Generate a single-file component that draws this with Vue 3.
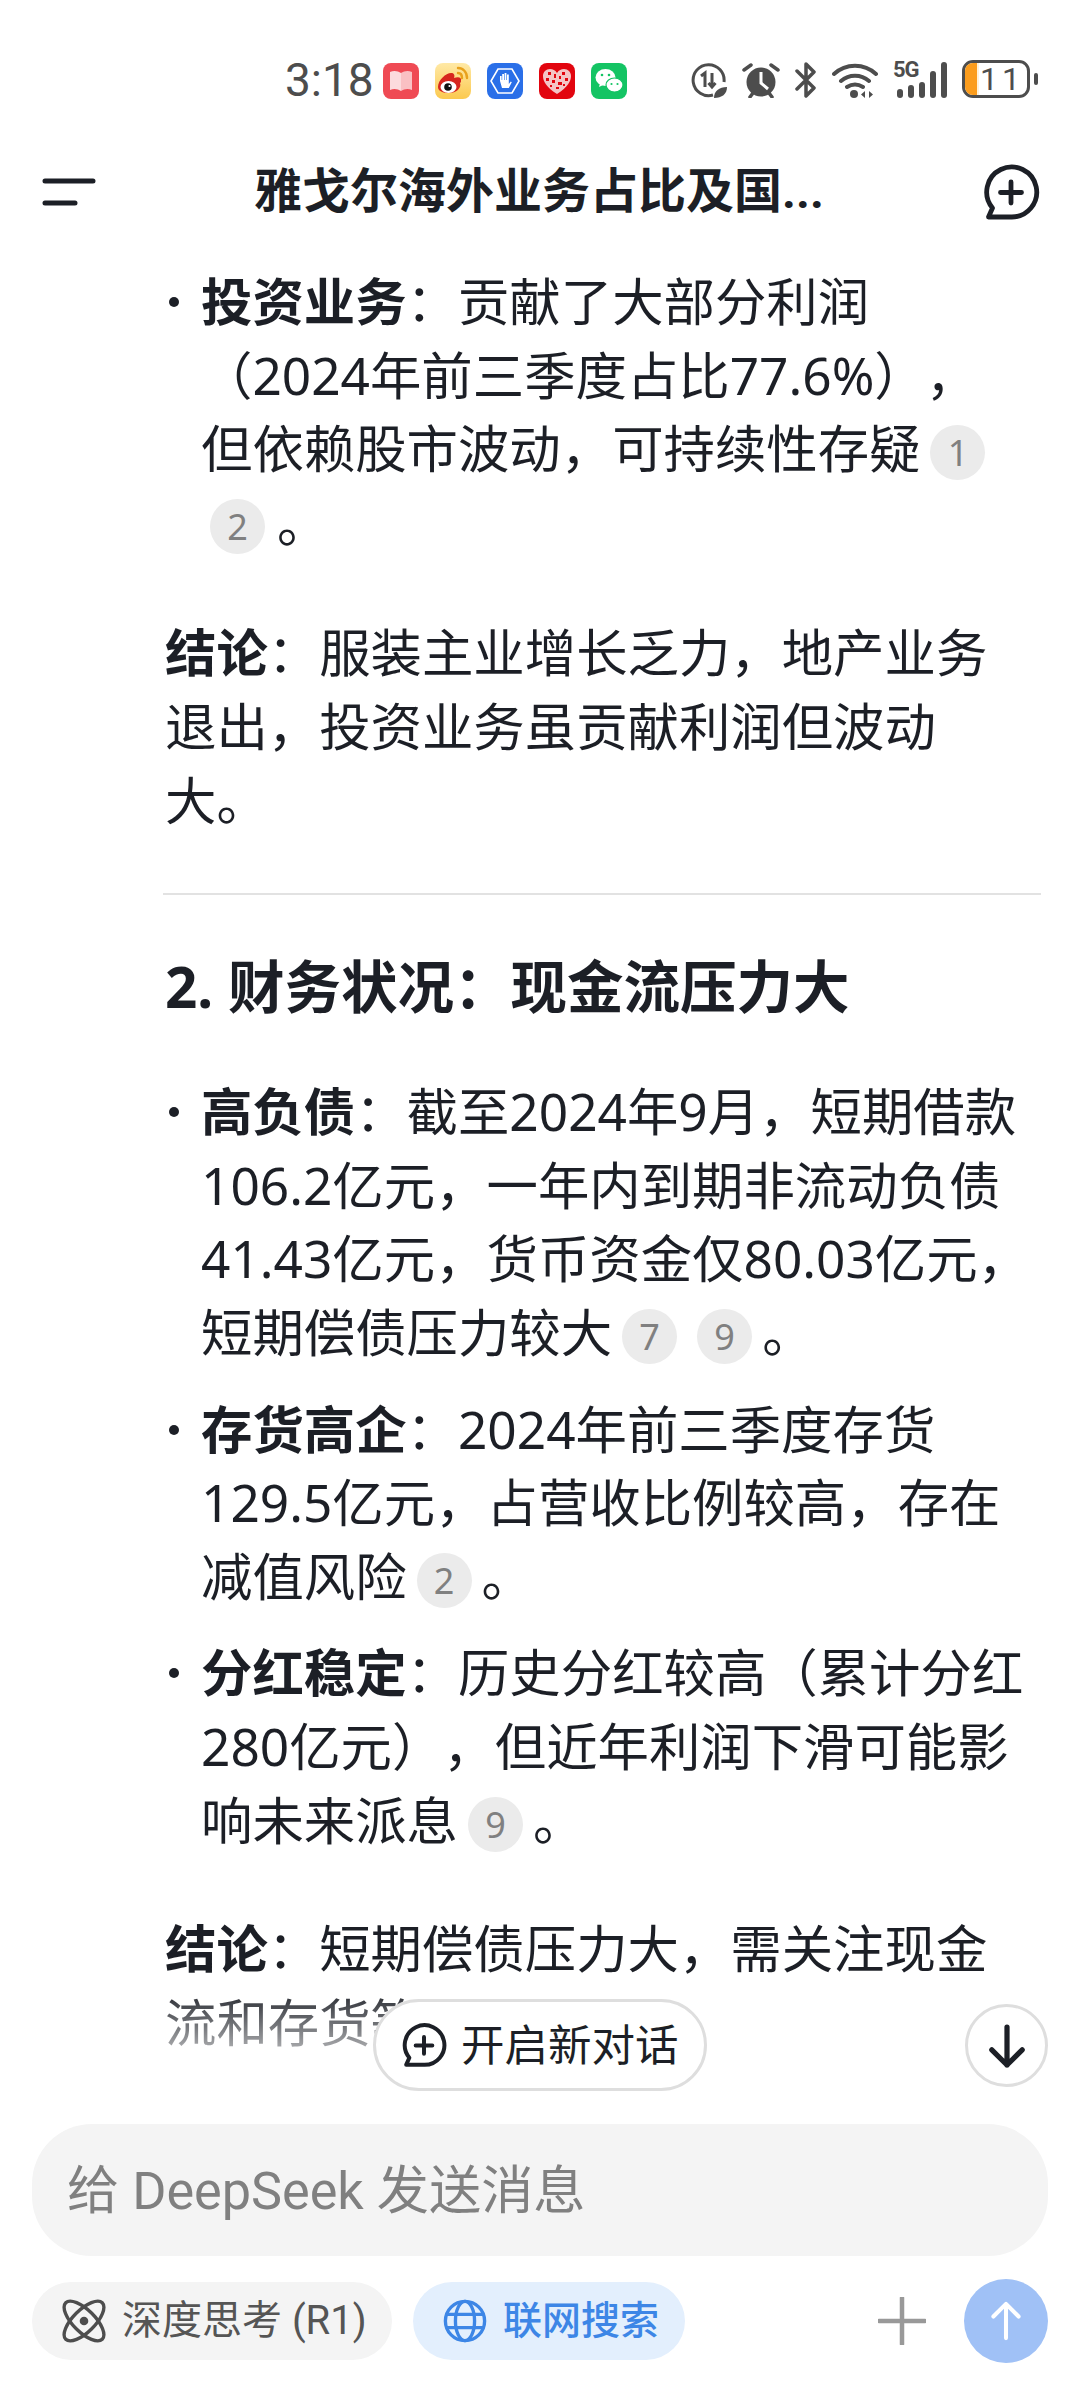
<script setup>
const apps = ['book', 'weibo', 'hand', 'heart', 'wechat']
</script>

<template>
  <div class="page">
    <div class="status">
      <span class="time">3:18</span>
      <div class="apps">
        <span v-for="a in apps" :key="a" class="app" :class="a">
          <svg v-if="a === 'book'" viewBox="0 0 36 36"><path d="M7 9c4-2 8-1 11 1v18c-3-2-7-3-11-1z" fill="#fff" opacity=".8"/><path d="M29 9c-4-2-8-1-11 1v18c3-2 7-3 11-1z" fill="#fff" opacity=".65"/></svg>
          <svg v-else-if="a === 'weibo'" viewBox="0 0 36 36"><path d="M3 24c0-7 8-14 13-14 3 0 4 2 3 5 5-2 8 0 7 3 0 1 0 1-1 2 2 5-4 10-11 10-6 0-11-2-11-6z" fill="#d7261e"/><ellipse cx="13.500" cy="24" rx="8" ry="6" fill="#fff"/><circle cx="13" cy="24" r="3.800" fill="#111"/><circle cx="14.500" cy="23" r="1.100" fill="#fff"/><path d="M23 5c5 0 9 4 9 10M23 10c2.500 0 4 2 4 5" fill="none" stroke="#e8a11c" stroke-width="2.400" stroke-linecap="round"/></svg>
          <svg v-else-if="a === 'hand'" viewBox="0 0 36 36"><path d="M11 6h14l7 12-7 12H11L4 18z" fill="none" stroke="#fff" stroke-width="1.600"/><path d="M13 18v-5h1.600v4h.6v-6h1.800v6h.6v-7h1.800v7h.6v-5.600h1.800V21l2-2.500 1 .8-3 5.700H15z" fill="#fff"/></svg>
          <svg v-else-if="a === 'heart'" viewBox="0 0 36 36"><path d="M18 31C7 24 4 18 4 13c0-4 3-7 7-7 3 0 5 1 7 4 2-3 4-4 7-4 4 0 7 3 7 7 0 5-3 11-14 18z" fill="#f4c4c6"/><path d="M9 9h3v3H9zM15 11h2v4h-2zM23 9h3v3h-3zM7 15h3v3H7zM13 17h3v3h-3zM20 13h2v3h-2zM19 19h4v3h-4zM26 15h3v3h-3zM11 22h2v2h-2zM17 24h3v2h-3zM24 21h2v2h-2z" fill="#e2050f"/></svg>
          <svg v-else viewBox="0 0 36 36"><ellipse cx="14.500" cy="14.500" rx="10" ry="8.500" fill="#fff"/><path d="M9 20l-1 4 4-2z" fill="#fff"/><ellipse cx="23.500" cy="22" rx="8.500" ry="7" fill="#fff" stroke="#14c464" stroke-width="1.200"/><circle cx="11" cy="12" r="1.300" fill="#14c464"/><circle cx="18" cy="12" r="1.300" fill="#14c464"/><circle cx="20.500" cy="21" r="1.100" fill="#14c464"/><circle cx="26.500" cy="21" r="1.100" fill="#14c464"/></svg>
        </span>
      </div>
      <div class="sys">
        <svg class="i-data" viewBox="0 0 36 36"><path d="M22 33A15.500 15.500 0 1 1 33 20" fill="none" stroke="#4d4d4d" stroke-width="3"/><path d="M10 14l4-3v14M21 11v14m-3.500-4l3.500 4 3.500-4" fill="none" stroke="#4d4d4d" stroke-width="3"/><path d="M23 36c0-7 5-11 13-11 0 7-5 11-13 11z" fill="#4d4d4d"/></svg>
        <svg class="i-alarm" viewBox="0 0 38 36"><circle cx="19" cy="20" r="14.500" fill="#4d4d4d"/><path d="M19 10v11l7 6" fill="none" stroke="#fff" stroke-width="3"/><path d="M2 8l7-5M36 8l-7-5M8 35l3-4M30 35l-3-4" stroke="#4d4d4d" stroke-width="3.500" stroke-linecap="round"/></svg>
        <svg class="i-bt" viewBox="0 0 22 36"><path d="M2 9l17 17-8 8V2l8 8L2 27" fill="none" stroke="#4d4d4d" stroke-width="3.500" stroke-linejoin="round" stroke-linecap="round"/></svg>
        <svg class="i-wifi" viewBox="0 0 46 36"><path d="M2 12c12-11 30-11 42 0M9 19c8-7 20-7 28 0M15 25c5-3 11-3 16 0" fill="none" stroke="#4d4d4d" stroke-width="4" stroke-linecap="round"/><circle cx="22" cy="32" r="4" fill="#4d4d4d"/><path d="M33 29v7l-4-3.500zM37 29v7l4-3.500z" fill="#4d4d4d"/></svg>
        <div class="signal">
          <span class="fiveg">5G</span>
          <span class="bar b0"></span><span class="bar b1"></span><span class="bar b2"></span><span class="bar b3"></span><span class="bar b4"></span>
        </div>
        <div class="battery">
          <div class="cell"><span class="fill"></span><span class="num">11</span></div>
          <span class="nub"></span>
        </div>
      </div>
    </div>

    <header class="bar-top">
      <svg class="menu" viewBox="0 0 54 30"><path d="M3 4h48M3 26h30" stroke="#1c1f26" stroke-width="5" stroke-linecap="round" fill="none"/></svg>
      <h1 class="title">雅戈尔海外业务占比及国...</h1>
      <svg class="newchat" viewBox="0 0 58 58"><path d="M10.500 45A25 25 0 1 1 29 54H6.500z" fill="none" stroke="#1c1f26" stroke-width="4.800" stroke-linejoin="round"/><path d="M29 19v21M18.500 29.500h21" stroke="#1c1f26" stroke-width="4.800" stroke-linecap="round"/></svg>
    </header>

    <main class="chat">
      <ul class="list first">
        <li><b>投资业务</b>：贡献了大部分利润<br>（2024年前三季度占比77.6%），<br>但依赖股市波动，可持续性存疑<span class="cite">1</span><br><span class="cite solo">2</span>。</li>
      </ul>
      <p class="para"><b>结论</b>：服装主业增长乏力，地产业务<br>退出，投资业务虽贡献利润但波动<br>大。</p>
      <hr class="rule">
      <h2 class="heading">2. 财务状况：现金流压力大</h2>
      <ul class="list">
        <li><b>高负债</b>：截至2024年9月，短期借款<br>106.2亿元，一年内到期非流动负债<br>41.43亿元，货币资金仅80.03亿元，<br>短期偿债压力较大<span class="cite">7</span><span class="cite">9</span>。</li>
        <li><b>存货高企</b>：2024年前三季度存货<br>129.5亿元，占营收比例较高，存在<br>减值风险<span class="cite">2</span>。</li>
        <li><b>分红稳定</b>：历史分红较高（累计分红<br>280亿元），但近年利润下滑可能影<br>响未来派息<span class="cite">9</span>。</li>
      </ul>
      <p class="para"><b>结论</b>：短期偿债压力大，需关注现金<br>流和存货等。</p>
      <div class="fade"></div>
      <button class="pill">
        <svg viewBox="0 0 58 58"><path d="M10.500 45A25 25 0 1 1 29 54H6.500z" fill="none" stroke="#1c1f26" stroke-width="5" stroke-linejoin="round"/><path d="M29 19v21M18.500 29.500h21" stroke="#1c1f26" stroke-width="5" stroke-linecap="round"/></svg>
        开启新对话
      </button>
      <button class="down">
        <svg viewBox="0 0 40 46"><path d="M20 3v40M4 27l16 16 16-16" fill="none" stroke="#1c1f26" stroke-width="5.500" stroke-linecap="round" stroke-linejoin="round"/></svg>
      </button>
    </main>

    <footer class="composer">
      <div class="input">给 DeepSeek 发送消息</div>
      <div class="tools">
        <div class="chip gray">
          <svg viewBox="0 0 46 46"><ellipse cx="23" cy="23" rx="11.500" ry="27" transform="rotate(-45 23 23)" fill="none" stroke="#4d4d4d" stroke-width="3.500"/><ellipse cx="23" cy="23" rx="11.500" ry="27" transform="rotate(45 23 23)" fill="none" stroke="#4d4d4d" stroke-width="3.500"/><circle cx="23" cy="23" r="4.500" fill="#4d4d4d"/></svg>
          深度思考 (R1)
        </div>
        <div class="chip blue">
          <svg viewBox="0 0 46 46"><circle cx="23" cy="23" r="20.500" fill="none" stroke="#3d86e6" stroke-width="3.500"/><ellipse cx="23" cy="23" rx="10" ry="20.500" fill="none" stroke="#3d86e6" stroke-width="3.500"/><path d="M3 16h40M3 30h40" stroke="#3d86e6" stroke-width="3.500"/></svg>
          联网搜索
        </div>
        <svg class="plus" viewBox="0 0 48 48"><path d="M24 1v46M1 24h46" stroke="#999" stroke-width="4.500" stroke-linecap="round"/></svg>
        <div class="send">
          <svg viewBox="0 0 40 46"><path d="M20 42V4M6 18L20 4l14 14" fill="none" stroke="#fff" stroke-width="4.500" stroke-linecap="round" stroke-linejoin="round"/></svg>
        </div>
      </div>
    </footer>
  </div>
</template>

<style scoped>
.page {
  width: 1080px;
  height: 2400px;
  display: flex;
  flex-direction: column;
  background: #fff;
  color: #1c1f26;
  font-family: Roboto, "Noto Sans CJK SC", sans-serif;
  overflow: hidden;
}
.status {
  height: 122px;
  padding: 58px 40px 0 285px;
  box-sizing: border-box;
  display: flex;
  align-items: flex-start;
  color: #4d4d4d;
  flex: none;
}
.time { font-size: 46px; line-height: 44px; width: 98px; }
.apps { display: flex; gap: 16px; margin-top: 5px; }
.app { width: 36px; height: 36px; border-radius: 8px; display: block; overflow: hidden; }
.app svg { display: block; width: 36px; height: 36px; }
.book { background: #ef4a54; }
.weibo { background: linear-gradient(#ffe9a6, #fbc94f); }
.hand { background: #2a6fe8; }
.heart { background: #e2050f; }
.wechat { background: #14c464; }
.sys { display: flex; align-items: flex-start; margin-left: 64px; margin-top: 4px; }
.i-data { width: 36px; height: 36px; }
.i-alarm { width: 38px; height: 36px; margin-left: 15px; }
.i-bt { width: 22px; height: 36px; margin-left: 15px; }
.i-wifi { width: 46px; height: 36px; margin-left: 15px; }
.signal { position: relative; width: 54px; height: 36px; margin-left: 15px; display: flex; align-items: flex-end; justify-content: flex-end; gap: 5px; }
.fiveg { position: absolute; left: 0; top: -3px; font-size: 22px; line-height: 22px; font-weight: 700; letter-spacing: -1px; }
.bar { width: 6px; background: #4d4d4d; border-radius: 3px; display: block; }
.b0 { height: 9px; }
.b1 { height: 13px; }
.b2 { height: 16px; }
.b3 { height: 27px; }
.b4 { height: 36px; }
.battery { display: flex; align-items: center; margin-left: 15px; margin-top: -2px; }
.cell { width: 68px; height: 38px; border: 3px solid #4d4d4d; border-radius: 11px; box-sizing: border-box; display: flex; overflow: hidden; position: relative; }
.fill { width: 12px; background: #fb9c1c; border-right: 2px solid #fff1d8; }
.num { font-size: 32px; line-height: 32px; margin-left: 1px; letter-spacing: 4px; }
.nub { width: 4px; height: 12px; border-radius: 2px; background: #4d4d4d; margin-left: 4px; }

.bar-top {
  height: 140px;
  padding: 0 40px 0 42px;
  display: flex;
  align-items: center;
  justify-content: space-between;
  flex: none;
}
.menu { width: 54px; height: 30px; }
.newchat { width: 58px; height: 58px; }
.title { margin: 0; font-size: 48px; font-weight: 700; line-height: 60px; }

.chat {
  flex: 1;
  min-height: 0;
  position: relative;
  overflow: hidden;
  padding: 3px 40px 0 165px;
  font-family: "Noto Sans", "Noto Sans CJK SC", sans-serif;
  font-size: 51.400px;
  line-height: 73.600px;
  text-spacing-trim: space-all;
}
.list { margin: 0; padding: 0 0 0 36px; list-style: none; }
.list li { position: relative; margin-bottom: 23px; }
.list li::before {
  content: "";
  position: absolute;
  left: -32px;
  top: 32px;
  width: 10px;
  height: 10px;
  border-radius: 50%;
  background: #1c1f26;
}
.para { margin: 55px 0 0; }
.first + .para { margin-top: 57px; }
b { font-weight: 700; }
.cite {
  display: inline-block;
  width: 55px;
  height: 55px;
  margin: -10px 10px -10px 10px;
  border-radius: 50%;
  background: #ebebeb;
  color: #808080;
  font-size: 36px;
  line-height: 55px;
  text-align: center;
  vertical-align: 2px;
}
.solo { margin-left: 9px; margin-right: 12px; }
.rule { border: 0; border-top: 2px solid #e2e2e2; margin: 56px 0 0 -2px; width: 878px; }
.heading { margin: 47px 0 0; font-size: 56.500px; line-height: 90px; font-weight: 700; }
.heading + .list { margin-top: 43px; }
.fade {
  position: absolute;
  left: 0;
  right: 0;
  top: 1725px;
  height: 100px;
  background: linear-gradient(rgba(255,255,255,0), #fff);
}
.pill {
  position: absolute;
  left: 373px;
  top: 1737px;
  width: 334px;
  height: 92px;
  border: 3px solid #dedede;
  border-radius: 46px;
  background: #fff;
  display: flex;
  align-items: center;
  gap: 14px;
  padding: 0 0 0 25px;
  box-sizing: border-box;
  font: inherit;
  font-size: 43.500px;
  color: #1c1f26;
}
.pill svg { width: 46px; height: 46px; }
.down {
  position: absolute;
  left: 965px;
  top: 1742px;
  width: 83px;
  height: 83px;
  border: 3px solid #dedede;
  border-radius: 50%;
  background: #fff;
  padding: 0;
  display: flex;
  align-items: center;
  justify-content: center;
}
.down svg { width: 38px; height: 44px; }

.composer {
  flex: none;
  height: 276px;
  padding: 0 32px;
  box-sizing: border-box;
  background: #fff;
}
.input {
  height: 132px;
  border-radius: 60px;
  background: #f4f4f4;
  color: #808080;
  font-size: 52.200px;
  line-height: 136px;
  padding-left: 35px;
}
.tools { display: flex; align-items: center; margin-top: 23px; height: 84px; }
.chip {
  height: 78px;
  border-radius: 39px;
  display: flex;
  align-items: center;
  font-size: 40px;
  line-height: 74px;
  box-sizing: border-box;
  flex: none;
}
.chip svg { width: 44px; height: 44px; flex: none; }
.gray { width: 360px; background: #f4f4f4; color: #555; padding-left: 30px; gap: 16px; }
.blue { width: 272px; margin-left: 21px; background: #e3effd; color: #3d86e6; padding-left: 30px; font-weight: 500; gap: 16px; font-size: 39px; }
.plus { width: 48px; height: 48px; margin-left: 193px; flex: none; }
.send {
  width: 84px;
  height: 84px;
  margin-left: 38px;
  border-radius: 50%;
  background: #a0c1f6;
  display: flex;
  align-items: center;
  justify-content: center;
  flex: none;
}
.send svg { width: 36px; height: 42px; }
</style>
